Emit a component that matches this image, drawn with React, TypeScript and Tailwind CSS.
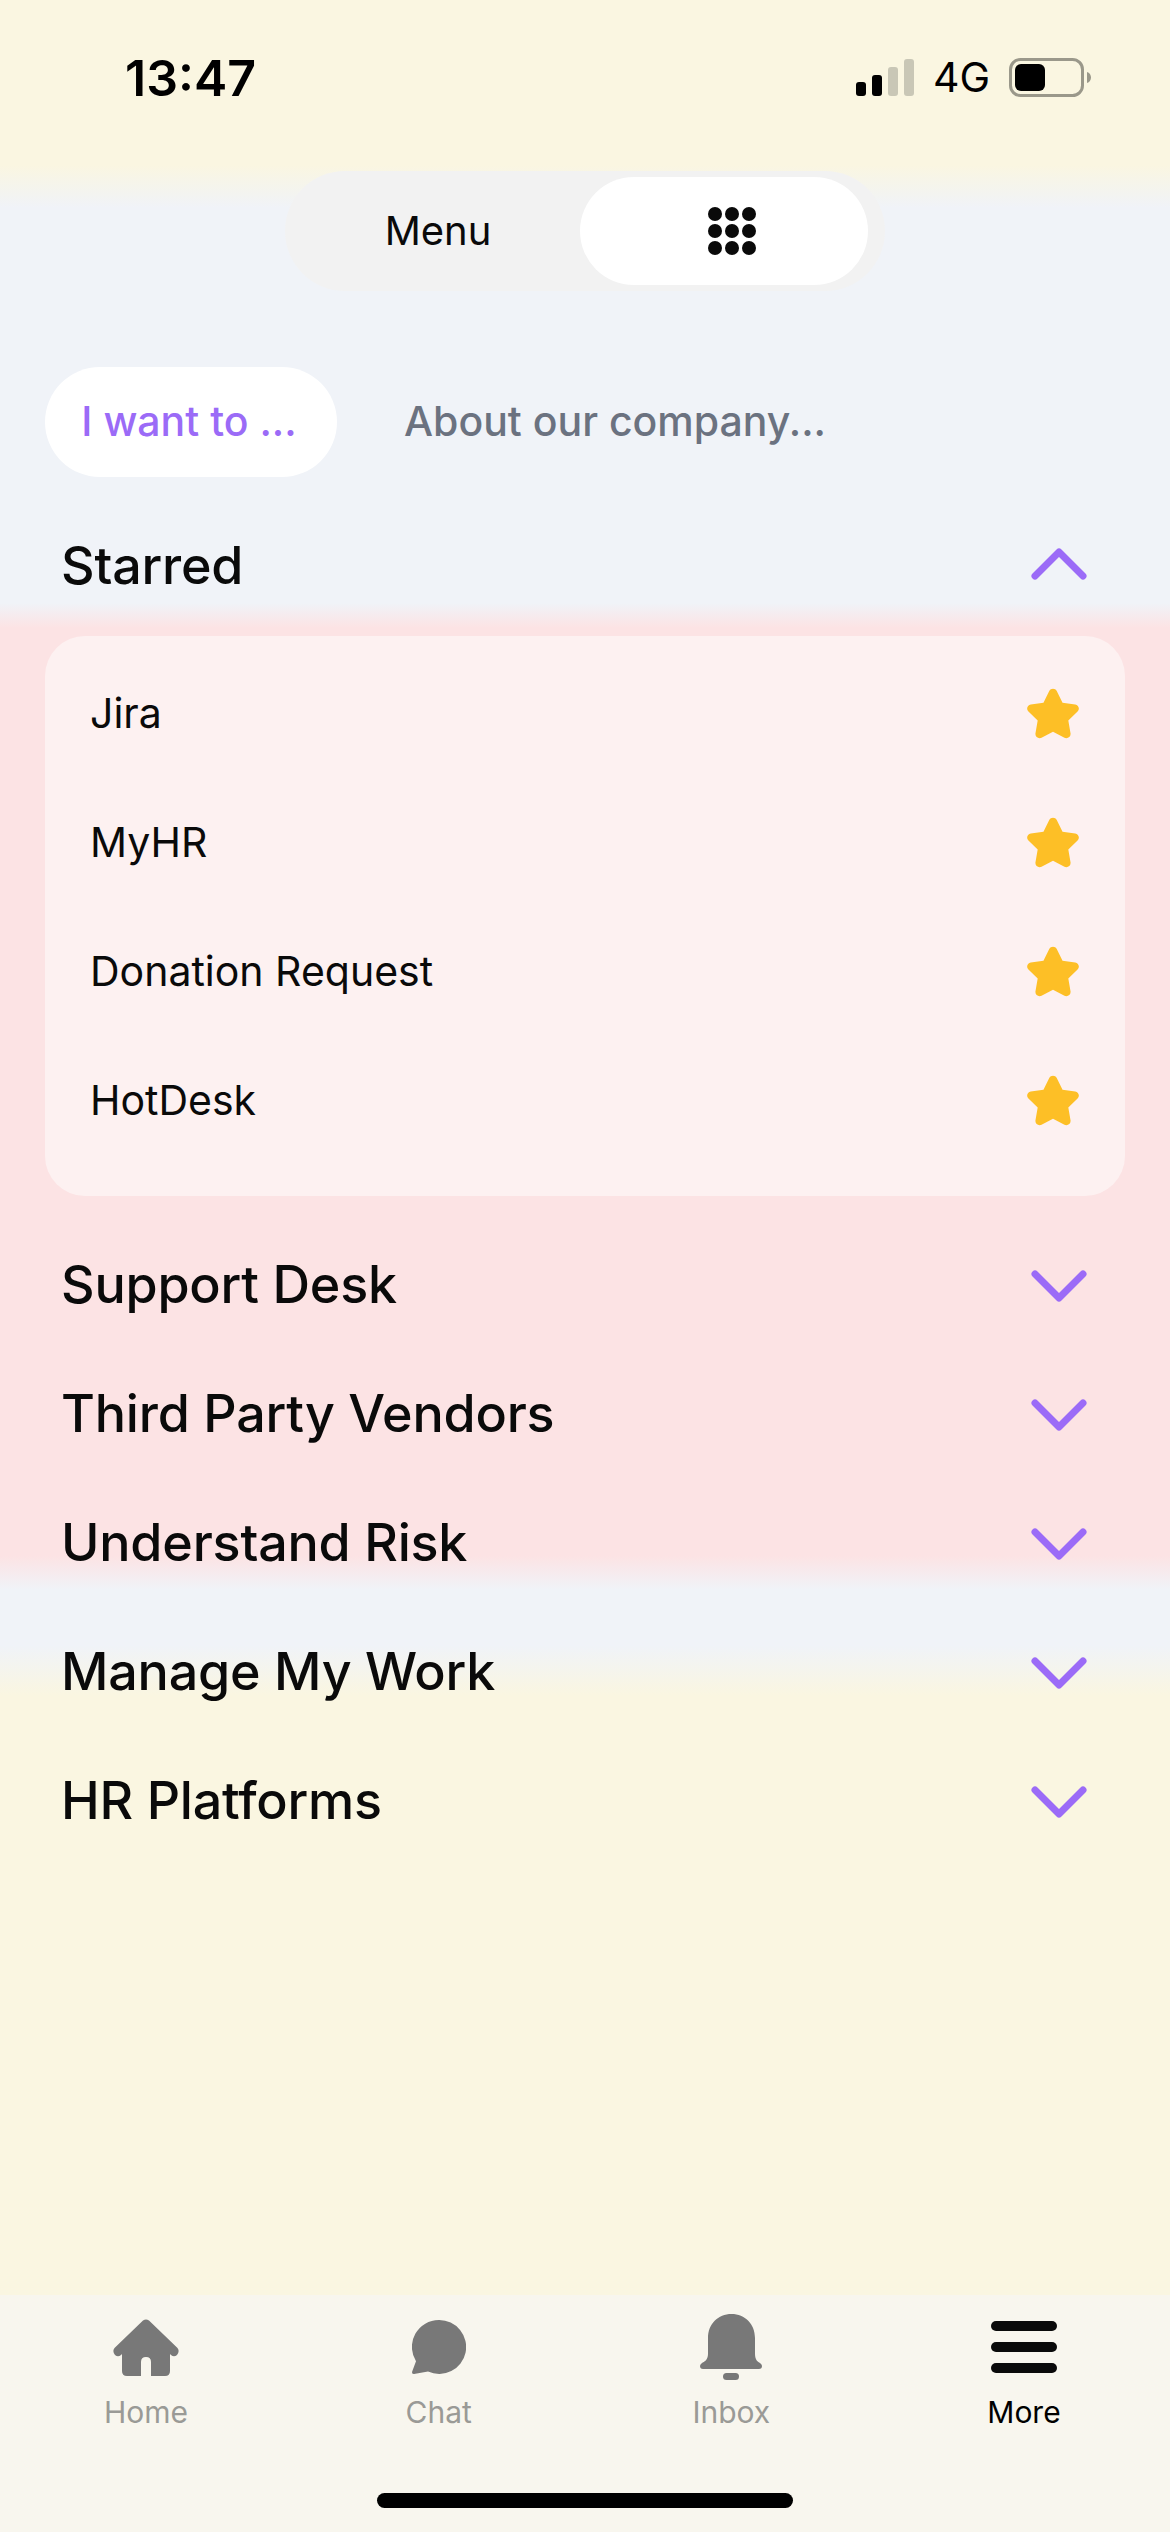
const sans = "font-['Inter','Noto_Sans',sans-serif]";

const starred = ['Jira', 'MyHR', 'Donation Request', 'HotDesk'];
const sections = ['Support Desk', 'Third Party Vendors', 'Understand Risk', 'Manage My Work', 'HR Platforms'];

function Star() {
  return (
    <svg width="54" height="52" viewBox="0 0 56 54" className="text-[#fdbf26]">
      <path
        fill="currentColor"
        d="M24.1 3.2c1.6-3.2 6.2-3.2 7.8 0l6 12 13.2 1.9c3.6.5 5 4.9 2.4 7.4l-9.6 9.3 2.3 13.2c.6 3.5-3.1 6.2-6.3 4.6L28 45.4l-11.9 6.2c-3.2 1.7-6.9-1.1-6.3-4.6l2.3-13.2-9.6-9.3C-.1 22 1.3 17.600 4.900 17.100l13.200-1.900z"
      />
    </svg>
  );
}

function Chevron({ up }: { up?: boolean }) {
  return (
    <svg width="56" height="32" viewBox="0 0 56 32" fill="none" className="text-[#9b6bf7] overflow-visible">
      <path
        d={up ? 'M4 26 28 2 52 26' : 'M4 5 28 29 52 5'}
        stroke="currentColor"
        strokeWidth="7"
        strokeLinecap="round"
        strokeLinejoin="round"
      />
    </svg>
  );
}

function Battery() {
  return (
    <svg width="82" height="39" viewBox="0 0 82 39" fill="none">
      <rect x="1.500" y="1.500" width="72" height="36" rx="10" stroke="#9a988a" strokeWidth="3" />
      <rect x="6" y="6" width="30" height="27" rx="6" fill="#000" />
      <path d="M78 14c2.500.8 4 3 4 5.500S80.500 24.200 78 25z" fill="#9a988a" />
    </svg>
  );
}

function Signal() {
  return (
    <div className="flex items-end gap-[6px] h-[37px]">
      <div className="w-[10px] h-[14px] rounded-[3px] bg-black" />
      <div className="w-[10px] h-[21px] rounded-[3px] bg-black" />
      <div className="w-[10px] h-[29px] rounded-[3px] bg-[#c9c7b6]" />
      <div className="w-[10px] h-[37px] rounded-[3px] bg-[#c9c7b6]" />
    </div>
  );
}

function DotsGrid() {
  return (
    <svg width="48" height="48" viewBox="0 0 48 48" fill="#0a0a0a">
      {[7, 24, 41].map((y) =>
        [7, 24, 41].map((x) => <circle key={`${x}-${y}`} cx={x} cy={y} r="7" />),
      )}
    </svg>
  );
}

function HomeIcon() {
  return (
    <svg width="66" height="57" viewBox="0 0 66 57" fill="#787878">
      <path d="M30 1.500Q33-.5 36 1.500L64.500 29Q67 32 64 36 61 38.500 58 36L57 35V52Q57 57 52 57H38V43Q38 38 33 38 28 38 28 43V57H14Q9 57 9 52V35L8 36Q5 38.500 2 36-1 32 1.500 29Z" />
    </svg>
  );
}

function ChatIcon() {
  return (
    <svg width="54" height="54" viewBox="0 0 54 54" fill="#787878">
      <path d="M27 0A27 27 0 1 1 16 51.600L2 54Q-.5 54 .2 51.500L4 41.300A27 27 0 0 1 27 0Z" />
    </svg>
  );
}

function BellIcon() {
  return (
    <svg width="62" height="66" viewBox="0 0 62 66" fill="#787878">
      <path d="M31.500 0C45 0 55 10 55 24V40C55 46 58 48 60 49Q62 50.500 62 52 62 55 59 55H3Q0 55 0 52 0 50.500 2 49C4 48 8 46 8 40V24C8 10 18 0 31.500 0Z" />
      <rect x="23" y="59" width="16" height="7" rx="3.500" />
    </svg>
  );
}

function BarsIcon() {
  return (
    <div className="flex flex-col gap-[11px] w-[66px]">
      <div className="h-[10px] rounded-full bg-[#0a0a0a]" />
      <div className="h-[10px] rounded-full bg-[#0a0a0a]" />
      <div className="h-[10px] rounded-full bg-[#0a0a0a]" />
    </div>
  );
}

function NavItem({ label, icon, active }: { label: string; icon: React.ReactNode; active?: boolean }) {
  return (
    <div className="flex flex-col items-center w-[292px]">
      <div className="h-[66px] flex items-center justify-center">{icon}</div>
      <span className={`mt-[14px] text-[30px] leading-[36px] ${active ? 'text-black' : 'text-[#9a9a96]'}`}>{label}</span>
    </div>
  );
}

export default function App() {
  return (
    <div
      className={`${sans} relative w-[1170px] h-[2532px] overflow-hidden flex flex-col bg-[linear-gradient(180deg,#faf6e1_0px,#faf6e1_165px,#f0f3f8_208px,#f0f3f8_603px,#fce3e4_628px,#fce3e4_1556px,#f0f3f8_1590px,#f0f3f8_1646px,#faf6e1_1695px,#faf6e1_2532px)]`}
    >
      {/* status bar */}
      <div className="h-[171px] flex items-start justify-between pl-[125px] pr-[79px]">
        <span className="mt-[48px] text-[50px] leading-[60px] font-semibold text-black">13:47</span>
        <div className="mt-[58px] flex items-center gap-[19px]">
          <Signal />
          <span className="text-[41px] leading-[39px] text-black">4G</span>
          <Battery />
        </div>
      </div>

      {/* switcher */}
      <div className="flex justify-center">
        <div className="w-[600px] h-[120px] rounded-[60px] bg-[#f2f2f2] flex items-center pl-[7px] pr-[17px]">
          <div className="flex-1 text-center text-[40px] text-[#0a0a0a] pl-[4px]">Menu</div>
          <div className="w-[288px] h-[108px] rounded-[54px] bg-white flex items-center justify-center pl-[16px]">
            <DotsGrid />
          </div>
        </div>
      </div>

      {/* tabs */}
      <div className="mt-[76px] pl-[45px] flex items-center gap-[67px]">
        <div className="w-[292px] h-[110px] rounded-[55px] bg-white flex items-center justify-center text-[41px] font-medium text-[#9b6bf7] pr-[4px]">I want to ...</div>
        <div className="text-[41px] font-medium text-[#6b7280]">About our company...</div>
      </div>

      {/* accordion */}
      <div className="mt-[24px] px-[45px]">
        <div className="h-[129px] flex items-center justify-between pl-[16px] pr-[38px]">
          <span className="text-[52px] font-medium tracking-[-0.2px] text-[#0a0a0a]">Starred</span>
          <Chevron up />
        </div>
        <div className="mt-[6px] h-[560px] rounded-[40px] bg-[#fdf1f1] pt-[13px] pl-[45px] pr-[45px]">
          {starred.map((item) => (
            <div key={item} className="h-[129px] flex items-center justify-between">
              <span className="text-[41px] text-[#0a0a0a]">{item}</span>
              <Star />
            </div>
          ))}
        </div>
        <div className="mt-[24px]">
          {sections.map((name) => (
            <div key={name} className="h-[129px] flex items-center justify-between pl-[16px] pr-[38px]">
              <span className="text-[52px] font-medium tracking-[-0.2px] text-[#0a0a0a]">{name}</span>
              <Chevron />
            </div>
          ))}
        </div>
      </div>

      {/* tab bar */}
      <div className="absolute left-0 right-0 bottom-0 h-[237px] bg-[#f8f6ee]">
        <div className="pt-[19px] flex justify-between">
          <NavItem label="Home" icon={<HomeIcon />} />
          <NavItem label="Chat" icon={<ChatIcon />} />
          <NavItem label="Inbox" icon={<BellIcon />} />
          <NavItem label="More" active icon={<BarsIcon />} />
        </div>
        <div className="absolute left-[377px] bottom-[24px] w-[416px] h-[15px] rounded-full bg-black" />
      </div>
    </div>
  );
}
